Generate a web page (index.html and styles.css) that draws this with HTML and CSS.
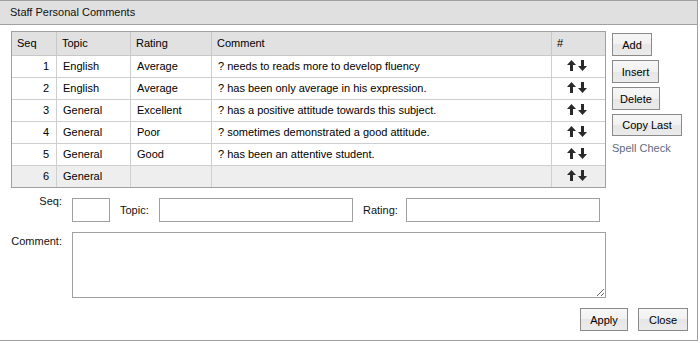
FILE: index.html
```html
<!DOCTYPE html>
<html>
<head>
<meta charset="utf-8">
<link rel="stylesheet" href="styles.css">
</head>
<body>
<div class="dialog">
  <div class="titlebar">Staff Personal Comments</div>
  <div class="main">
    <div class="left">
      <div class="grid">
        <div class="c h">Seq</div><div class="c h">Topic</div><div class="c h">Rating</div><div class="c h">Comment</div><div class="c h last">#</div>

        <div class="c num">1</div><div class="c">English</div><div class="c">Average</div><div class="c">? needs to reads more to develop fluency</div><div class="c ic last"><svg class="arrows" viewBox="0 0 20 11"><path d="M4.5 0 L9 5 H6 V11 H3 V5 H0 Z"/><path d="M15.5 11 L11 6 H14 V0 H17 V6 H20 Z"/></svg></div>

        <div class="c num">2</div><div class="c">English</div><div class="c">Average</div><div class="c">? has been only average in his expression.</div><div class="c ic last"><svg class="arrows" viewBox="0 0 20 11"><path d="M4.5 0 L9 5 H6 V11 H3 V5 H0 Z"/><path d="M15.5 11 L11 6 H14 V0 H17 V6 H20 Z"/></svg></div>

        <div class="c num">3</div><div class="c">General</div><div class="c">Excellent</div><div class="c">? has a positive attitude towards this subject.</div><div class="c ic last"><svg class="arrows" viewBox="0 0 20 11"><path d="M4.5 0 L9 5 H6 V11 H3 V5 H0 Z"/><path d="M15.5 11 L11 6 H14 V0 H17 V6 H20 Z"/></svg></div>

        <div class="c num">4</div><div class="c">General</div><div class="c">Poor</div><div class="c">? sometimes demonstrated a good attitude.</div><div class="c ic last"><svg class="arrows" viewBox="0 0 20 11"><path d="M4.5 0 L9 5 H6 V11 H3 V5 H0 Z"/><path d="M15.5 11 L11 6 H14 V0 H17 V6 H20 Z"/></svg></div>

        <div class="c num">5</div><div class="c">General</div><div class="c">Good</div><div class="c">? has been an attentive student.</div><div class="c ic last"><svg class="arrows" viewBox="0 0 20 11"><path d="M4.5 0 L9 5 H6 V11 H3 V5 H0 Z"/><path d="M15.5 11 L11 6 H14 V0 H17 V6 H20 Z"/></svg></div>

        <div class="c num sel end">6</div><div class="c sel end">General</div><div class="c sel end"></div><div class="c sel end"></div><div class="c ic sel end last"><svg class="arrows" viewBox="0 0 20 11"><path d="M4.5 0 L9 5 H6 V11 H3 V5 H0 Z"/><path d="M15.5 11 L11 6 H14 V0 H17 V6 H20 Z"/></svg></div>
      </div>

      <div class="row1">
        <label class="lbl lbl-seq">Seq:</label>
        <input class="field f-seq" type="text">
        <label class="lbl lbl-topic">Topic:</label>
        <input class="field f-topic" type="text">
        <label class="lbl lbl-rating">Rating:</label>
        <input class="field f-rating" type="text">
      </div>
      <div class="row2">
        <label class="lbl lbl-comment">Comment:</label>
        <textarea class="field f-comment"></textarea>
      </div>
    </div>
    <div class="side">
      <button class="btn b-add">Add</button>
      <button class="btn b-insert">Insert</button>
      <button class="btn b-delete">Delete</button>
      <button class="btn b-copy">Copy Last</button>
      <span class="spell">Spell Check</span>
    </div>
  </div>
  <div class="actions">
    <button class="btn b-apply">Apply</button>
    <button class="btn b-close">Close</button>
  </div>
</div>
</body>
</html>
```

FILE: styles.css
```css
* { box-sizing: border-box; }
html, body { margin: 0; padding: 0; background: #fff; }
body { font-family: "Liberation Sans", Arial, sans-serif; font-size: 11px; color: #000; }

.dialog {
  width: 698px;
  height: 341px;
  border-top: 1px solid #a0a0a0;
  border-right: 1px solid #a0a0a0;
  border-bottom: 1px solid #a0a0a0;
  background: #fff;
}
.titlebar {
  height: 24px;
  line-height: 23px;
  padding-left: 10px;
  background: #e0e0e0;
  border-bottom: 1px solid #a0a0a0;
  color: #111;
}
.main {
  display: flex;
  padding-top: 6px;
}
.left { width: 606px; }
.grid {
  margin-left: 11px;
  width: 595px;
  display: grid;
  grid-template-columns: 45px 74px 81px 340px 53px;
  border: 1px solid #a0a0a0;
}
.c {
  height: 22px;
  line-height: 21px;
  padding-left: 6px;
  border-right: 1px solid #cfcfcf;
  border-bottom: 1px solid #cfcfcf;
  white-space: nowrap;
  overflow: hidden;
}
.c.h { height: 24px; line-height: 23px; background: #e1e1e1; border-color: #c8c8c8; padding-left: 5px; }
.c.last { border-right: none; }
.c.end { border-bottom: none; height: 21px; }
.c.num { text-align: right; padding-left: 0; padding-right: 7px; }
.c.sel { background: #eeeeee; }
.c.ic { padding-left: 0; text-align: center; padding-right: 4px; }
.arrows { width: 20px; height: 11px; vertical-align: -1px; fill: #2a2a2a; }

.side {
  margin-left: 6px;
  padding-top: 2px;
  display: flex;
  flex-direction: column;
  align-items: flex-start;
  gap: 4px;
}
.btn {
  font-family: "Liberation Sans", Arial, sans-serif;
  font-size: 11px;
  color: #000;
  height: 23px;
  padding: 0;
  border: 1px solid #8a8a8a;
  border-radius: 0;
  background: linear-gradient(#f6f6f6, #f1f1f1 50%, #e6e6e6 50%, #ebebeb);
  line-height: 20px;
  margin: 0;
  text-align: center;
}
.b-add { width: 40px; }
.b-insert { width: 47px; }
.b-delete { width: 48px; }
.b-copy { width: 70px; height: 22px; }
.spell { color: #5b6c80; margin-top: 1px; line-height: 14px; }

.row1 {
  display: flex;
  align-items: center;
  margin-top: 10px;
  height: 24px;
}
.lbl { color: #111; line-height: 14px; }
.lbl-seq { width: 62px; text-align: right; align-self: flex-start; margin-top: -4px; }
.field {
  border: 1px solid #a0a0a0;
  background: #fff;
  height: 24px;
  margin: 0;
  padding: 2px 3px;
  font-family: "Liberation Sans", Arial, sans-serif;
  font-size: 11px;
}
.f-seq { width: 38px; margin-left: 10px; }
.lbl-topic { margin-left: 10px; width: 39px; }
.f-topic { width: 194px; }
.lbl-rating { margin-left: 10px; width: 43px; }
.f-rating { width: 194px; }

.row2 { display: flex; margin-top: 10px; }
.lbl-comment { width: 62px; text-align: right; margin-top: 2px; }
.f-comment { display: block; width: 534px; height: 66px; margin-left: 10px; resize: both; }

.actions {
  display: flex;
  justify-content: flex-end;
  gap: 10px;
  padding-right: 9px;
  margin-top: 10px;
}
.b-apply { width: 48px; }
.b-close { width: 50px; }
```
